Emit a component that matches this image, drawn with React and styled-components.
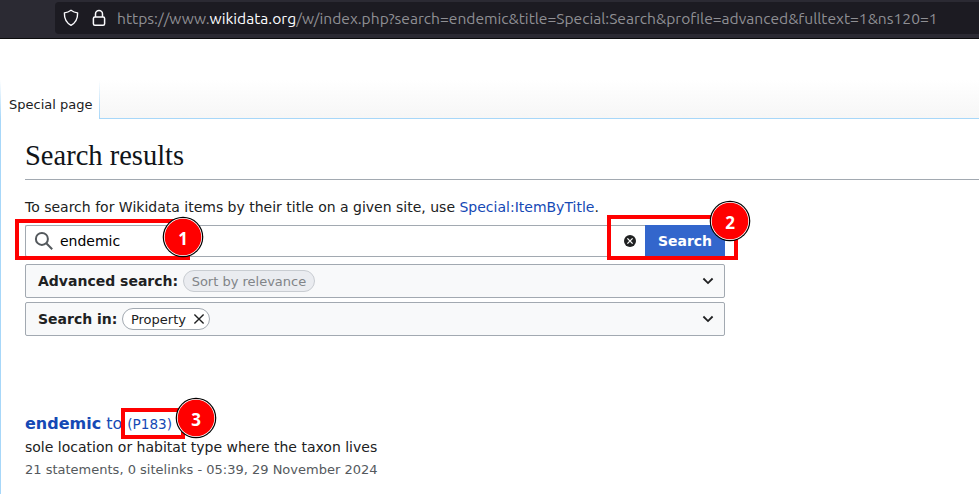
import React from "react";
import styled, { createGlobalStyle } from "styled-components";

const Global = createGlobalStyle`
  * { box-sizing: border-box; }
  html, body { margin: 0; background: #fff; overflow: hidden; }
`;

const Page = styled.div`
  position: relative;
  width: 979px;
  height: 494px;
  overflow: hidden;
  background: #fff;
  color: #202122;
  font-family: "DejaVu Sans", sans-serif;
  font-size: 14px;
  white-space: nowrap;
`;

const Toolbar = styled.header`
  height: 39px;
  padding: 2px 0 0 55px;
  background: #2b2a33;
  border-bottom: 1px solid #0c0c0d;
`;

const UrlField = styled.div`
  display: flex;
  align-items: center;
  height: 32px;
  background: #1c1b22;
  border-radius: 4px 0 0 4px;
  svg { flex: none; }
`;

const ShieldIcon = styled.svg`
  margin-left: 8px;
`;

const LockIcon = styled.svg`
  margin-left: 12px;
`;

const Url = styled.span`
  margin-left: 10px;
  font: 15.6px/32px Ubuntu, "Noto Sans", sans-serif;
  color: #8f8f94;
  b { font-weight: 400; color: #fbfbfe; }
`;

const TabStrip = styled.nav`
  display: flex;
  height: 39px;
  margin-top: 41px;
  padding-left: 1px;
  background: linear-gradient(#a7d7f900, #a7d7f9) left / 1px 100% no-repeat;
`;

const Tab = styled.div`
  width: 98px;
  padding-left: 8px;
  font-size: 13px;
  line-height: 50px;
`;

const TabFill = styled.div`
  flex: 1;
  border-bottom: 1px solid #a7d7f9;
  background:
    linear-gradient(#a7d7f900, #a7d7f9) left / 1px 100% no-repeat,
    linear-gradient(#fff, #f6f6f6);
`;

const Content = styled.main`
  height: 376px;
  padding: 18px 0 0 24px;
  border-left: 1px solid #a7d7f9;
`;

const Title = styled.h1`
  height: 43px;
  margin: 0;
  border-bottom: 1px solid #a2a9b1;
  color: #101418;
  font: 400 28.5px/38px "Liberation Serif", serif;
`;

const Intro = styled.p`
  height: 22px;
  margin: 16px 0 7px;
  line-height: 22px;
`;

const Link = styled.a`
  color: #1549b5;
`;

const SearchRow = styled.form`
  display: flex;
  width: 700px;
  height: 32px;
  margin: 0 0 7px;
`;

const Field = styled.div`
  display: flex;
  flex: 1;
  align-items: center;
  justify-content: space-between;
  padding: 0 9px 0 8px;
  border: 1px solid #a2a9b1;
  border-right: 0;
  border-radius: 2px 0 0 2px;
  color: #000;
`;

const Query = styled.span`
  display: flex;
  align-items: center;
  gap: 6px;
`;

const SearchButton = styled.div`
  width: 80px;
  background: #36c;
  color: #fff;
  font-weight: 700;
  line-height: 32px;
  text-align: center;
`;

const Panel = styled.section`
  display: flex;
  align-items: center;
  width: 700px;
  height: 34px;
  margin-bottom: 4px;
  padding: 0 8px 0 12px;
  border: 1px solid #a2a9b1;
  border-radius: 2px;
  background: #f8f9fa;
  font-weight: 700;
`;

const Pill = styled.span`
  display: flex;
  align-items: center;
  height: 22px;
  margin-left: 5px;
  padding: 0 ${(p) => (p.$muted ? "7.5px" : "4px")} 0 7.5px;
  border: 1px solid ${(p) => (p.$muted ? "#c8ccd1" : "#a2a9b1")};
  border-radius: 11px;
  background: ${(p) => (p.$muted ? "#eaecf0" : "#fff")};
  color: ${(p) => (p.$muted ? "#818488" : "#202122")};
  font-size: 13px;
  font-weight: 400;
  svg { margin-left: 7.5px; }
`;

const Chevron = styled.svg`
  margin-left: auto;
`;

const Result = styled.article`
  margin-top: 76px;
`;

const ResultTitle = styled.div`
  display: flex;
  height: 24px;
  line-height: 24px;
  font-size: 16px;
  color: #1549b5;
  b { margin-right: 5px; }
`;

const ItemId = styled.span`
  margin-left: 5px;
  font-size: 13.6px;
  line-height: 25px;
`;

const Description = styled.div`
  height: 23px;
  line-height: 22px;
`;

const Meta = styled.div`
  height: 22px;
  color: #54595d;
  font-size: 13px;
  line-height: 22px;
`;

const Highlight = styled.div`
  position: absolute;
  left: ${(p) => p.$x}px;
  top: ${(p) => p.$y}px;
  width: ${(p) => p.$w}px;
  height: ${(p) => p.$h}px;
  border: 4px solid #f00;
`;

const Marker = styled.div`
  position: absolute;
  display: grid;
  place-items: center;
  left: ${(p) => p.$x}px;
  top: ${(p) => p.$y}px;
  width: 42px;
  height: 42px;
  color: #fff;
  font: 700 17px/24px "Open Sans", sans-serif;
  svg, span { grid-area: 1 / 1; }
  span { padding-top: 4px; }
`;

const Badge = ({ x, y, children }) => (
  <Marker $x={x} $y={y}>
    <svg width="42" height="42" viewBox="0 0 42 42">
      <circle cx="21" cy="21" r="20.3" fill="#000" />
      <circle cx="21" cy="21" r="19.1" fill="#fff" />
      <circle cx="21" cy="21" r="18.3" fill="#f00" />
    </svg>
    <span>{children}</span>
  </Marker>
);

const Down = () => (
  <Chevron width="16" height="16" viewBox="0 0 16 16" fill="none" stroke="#202122" strokeWidth="1.8">
    <path d="M3.4 5.5 8 10.1l4.6-4.6" />
  </Chevron>
);

export default function App() {
  return (
    <Page>
      <Global />
      <Toolbar>
        <UrlField>
          <ShieldIcon width="16" height="18" viewBox="0 0 16 18" fill="none" stroke="#fbfbfe" strokeWidth="1.4" strokeLinejoin="round">
            <path d="M8 1.3c2 1.5 4.2 2.3 6.6 2.6.2 5.5-1.8 9.8-6.6 12.5C3.2 13.7 1.2 9.4 1.4 3.9 3.8 3.6 6 2.8 8 1.3Z" />
          </ShieldIcon>
          <LockIcon width="16" height="18" viewBox="0 0 16 18" fill="none" stroke="#fbfbfe" strokeWidth="1.5">
            <rect x="2.4" y="8" width="11.2" height="8.3" rx="1.5" />
            <path d="M4.5 8V4.900a3.5 3.5 0 0 1 7 0V8" />
          </LockIcon>
          <Url>
            https://www.<b>wikidata.org</b>/w/index.php?search=endemic&amp;title=Special:Search&amp;profile=advanced&amp;fulltext=1&amp;ns120=1
          </Url>
        </UrlField>
      </Toolbar>
      <TabStrip>
        <Tab>Special page</Tab>
        <TabFill />
      </TabStrip>
      <Content>
        <Title>Search results</Title>
        <Intro>
          To search for Wikidata items by their title on a given site, use <Link>Special:ItemByTitle</Link>.
        </Intro>
        <SearchRow>
          <Field>
            <Query>
              <svg width="20" height="20" viewBox="0 0 20 20" fill="none" stroke="#54595d" strokeWidth="2">
                <circle cx="7.9" cy="7.9" r="6" />
                <path d="m12.3 12.3 5.9 5.9" />
              </svg>
              endemic
            </Query>
            <svg width="12" height="12" viewBox="0 0 12 12">
              <circle cx="6" cy="6" r="6" fill="#202122" />
              <path d="m3.4 3.4 5.2 5.2m0-5.2L3.4 8.6" stroke="#fff" strokeWidth="1.3" />
            </svg>
          </Field>
          <SearchButton>Search</SearchButton>
        </SearchRow>
        <Panel>
          Advanced search:
          <Pill $muted>Sort by relevance</Pill>
          <Down />
        </Panel>
        <Panel>
          Search in:
          <Pill>
            Property
            <svg width="12" height="12" viewBox="0 0 12 12" stroke="#202122" strokeWidth="1.4">
              <path d="m1.4 1.4 9.2 9.2m0-9.2L1.4 10.6" />
            </svg>
          </Pill>
          <Down />
        </Panel>
        <Result>
          <ResultTitle>
            <b>endemic</b>to<ItemId>(P183)</ItemId>
          </ResultTitle>
          <Description>sole location or habitat type where the taxon lives</Description>
          <Meta>21 statements, 0 sitelinks - 05:39, 29 November 2024</Meta>
        </Result>
      </Content>
      <Highlight $x={15} $y={219} $w={175} $h={41} />
      <Highlight $x={607} $y={215} $w={131} $h={45} />
      <Highlight $x={121} $y={408} $w={64} $h={31} />
      <Badge x={162} y={216}>1</Badge>
      <Badge x={709} y={200}>2</Badge>
      <Badge x={175} y={397}>3</Badge>
    </Page>
  );
}
